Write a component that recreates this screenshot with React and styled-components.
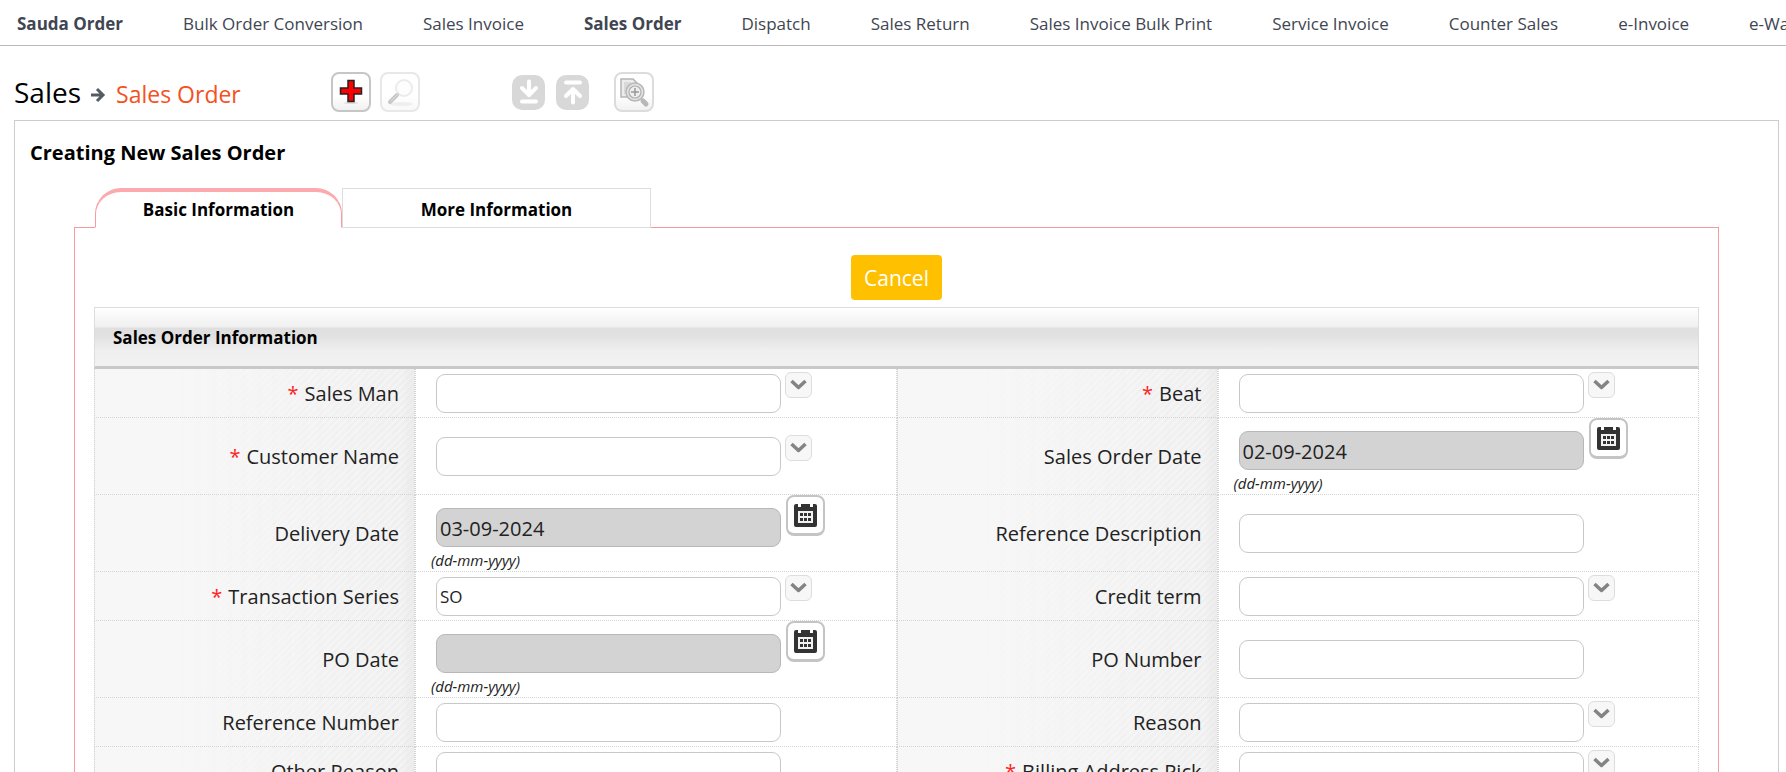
import React from "react";
import styled, { createGlobalStyle, css } from "styled-components";

const GlobalStyle = createGlobalStyle`
  *, *::before, *::after { box-sizing: border-box; }
  html, body, #root { height: 100%; }
  body {
    margin: 0;
    background: #fff;
    color: #000;
    font-family: "Segoe UI", "Open Sans", "Noto Sans", sans-serif;
  }
  button, input { font-family: inherit; }
`;

const Page = styled.div`
  height: 100%;
  overflow: hidden;
`;

const Nav = styled.nav`
  display: flex;
  align-items: center;
  gap: 60px;
  height: 46px;
  padding: 2px 17px 0;
  border-bottom: 1px solid #bbb;
  overflow: hidden;
`;

const NavLink = styled.a`
  flex: none;
  color: #3f4652;
  font-size: 17px;
  font-weight: ${(p) => (p.$strong ? 700 : 400)};
  line-height: 24px;
  text-decoration: none;
  white-space: nowrap;
`;

const Header = styled.header`
  display: flex;
  align-items: center;
  height: 74px;
  padding: 18px 14px 0;
`;

const Breadcrumb = styled.div`
  display: flex;
  align-items: baseline;
  width: 317px;
  padding-top: 2px;
`;

const Crumb = styled.a`
  color: #000;
  font-size: 28px;
  line-height: 40px;
  text-decoration: none;
`;

const CrumbArrow = styled.svg`
  margin: 0 10px;
`;

const CrumbCurrent = styled.h1`
  margin: 0;
  color: #f4511e;
  font-size: 23px;
  font-weight: 400;
  line-height: 40px;
`;

const ToolGroup = styled.div`
  display: flex;
  align-items: center;
  gap: ${(p) => p.$gap}px;
  margin-right: ${(p) => p.$after || 0}px;
`;

const ToolButton = styled.button`
  display: grid;
  place-items: center;
  width: 40px;
  height: 40px;
  padding: 0;
  border: 2px solid ${(p) => (p.$soft ? "#dcdcdc" : "#c6c6c6")};
  border-radius: 8px;
  background: linear-gradient(#fff 60%, #f1f1f1);
  opacity: ${(p) => (p.$faded ? 0.4 : 1)};
`;

const FlatButton = styled.button`
  display: grid;
  place-items: center;
  width: 33px;
  height: 35px;
  padding: 0;
  border: 0;
  border-radius: 10px;
  background: #d8d8d8;
`;

const Panel = styled.main`
  margin: 0 7px 0 14px;
  border: 1px solid #ccc;
  border-bottom: 0;
`;

const PanelTitle = styled.h2`
  margin: 0;
  padding: 16px 15px 20px;
  font-size: 20px;
  font-weight: 700;
  line-height: 31px;
`;

const Tabs = styled.div`
  display: flex;
  margin: 0 80px;
`;

const Tab = styled.button`
  position: relative;
  width: ${(p) => (p.$active ? 247 : 309)}px;
  height: 40px;
  margin-bottom: -1px;
  padding: 2px 0 0;
  border: 1px solid #ddd;
  background: #fff;
  color: #000;
  font-size: 17px;
  font-weight: 700;
  ${(p) =>
    p.$active &&
    css`
      padding: 0 0 1px;
      border-color: #fd9a9f;
      border-top: 4px solid #fdaaae;
      border-bottom-color: #fff;
      border-radius: 26px 26px 0 0;
    `}
`;

const TabPanel = styled.section`
  margin: 0 59px;
  padding: 27px 19px 0;
  border: 1px solid #f79a9e;
  border-bottom: 0;
`;

const Actions = styled.div`
  display: flex;
  justify-content: center;
  padding-bottom: 7px;
`;

const CancelButton = styled.button`
  height: 45px;
  padding: 0 13px;
  border: 0;
  border-radius: 4px;
  background: #ffc000;
  color: #fff;
  font-size: 21px;
`;

const SectionTitle = styled.h3`
  margin: 0;
  padding: 20px 18px 18px;
  border: 1px solid #ddd;
  border-bottom: 3px solid #c9c9c9;
  background: linear-gradient(#fff 0, #f0f0f0 19px, #dfdfdf 20px, #e1e1e1 28px, #efefef 42px, #f2f2f2 58px);
  font-size: 17px;
  font-weight: 700;
  line-height: 20px;
`;

const Row = styled.div`
  display: grid;
  grid-template-columns: 20% 30% 20% 30%;
`;

const dotted = "1px dotted #d4d4d4";

const LabelCell = styled.div`
  display: flex;
  align-items: center;
  justify-content: flex-end;
  gap: 6px;
  padding: 2px 15px 0 0;
  border: ${dotted};
  border-top: 0;
  background:
    linear-gradient(90deg, transparent calc(100% - 14px), #e6e6e680 100%),
    linear-gradient(90deg, #f7f7f7 25%, #f7f7f700 100%),
    repeating-linear-gradient(135deg, #efefef 0 3px, #f4f4f4 3px 5px);
  color: #222;
  font-size: 20px;
  line-height: 28px;
`;

const Required = styled.span`
  color: #f22;
`;

const FieldCell = styled.div`
  display: flex;
  align-items: center;
  padding: 0 0 0 15px;
  border: ${dotted};
  border-top: 0;
  background: #fff;
`;

const Control = styled.div`
  display: flex;
  align-items: flex-start;
  gap: ${(p) => (p.$date ? 5 : 4)}px;
  padding: ${(p) => (p.$date ? "0" : "3px 0 4px 5px")};
`;

const DateStack = styled.div`
  display: flex;
  flex-direction: column;
  padding-top: 13px;
`;

const TextInput = styled.input`
  width: 345px;
  height: 39px;
  margin: ${(p) => (p.$date ? "0 0 0 5px" : "2px 0 0")};
  padding: ${(p) => (p.$date ? "2px 3px 0" : "0 3px")};
  border: 1px solid ${(p) => (p.$date ? "#b8b8b8" : "#c8c8c8")};
  border-radius: 9px;
  background: ${(p) => (p.$date ? "#d3d3d3" : "#fff")};
  color: #222;
  font-size: ${(p) => (p.$date ? 20 : 17)}px;
`;

const Hint = styled.em`
  padding-top: 3px;
  font-size: 15px;
  line-height: 21px;
  color: #222;
`;

const PickButton = styled.button`
  display: grid;
  place-items: center;
  width: 27px;
  height: 26px;
  padding: 0;
  border: 1px solid #ddd;
  border-radius: 6px;
  background: #f7f7f7;
`;

const CalendarButton = styled.button`
  display: grid;
  place-items: center;
  width: 39px;
  height: 41px;
  padding: 0;
  border: 2px solid #c4c4c4;
  border-bottom-width: 3px;
  border-radius: 8px;
  background: #fff;
`;

const PlusIcon = () => (
  <svg width="24" height="26" viewBox="0 0 24 26">
    <ellipse cx="12" cy="24" rx="7" ry="1" fill="#ddd" />
    <path d="M9 1.500h6v7.500h7.500v6H15v7.500H9V15H1.500V9H9z" fill="#f00" stroke="#222" strokeWidth="1.500" />
  </svg>
);

const SearchIcon = () => (
  <svg width="32" height="32" viewBox="0 0 32 32">
    <ellipse cx="17" cy="28" rx="12" ry="2" fill="#d8d8d8" />
    <circle cx="20" cy="12" r="8" fill="#fcfcfc" stroke="#cfcfcf" strokeWidth="2" />
    <path d="M13 19 6 26" stroke="#777" strokeWidth="4" strokeLinecap="round" />
    <path d="M15 17 7 25" stroke="#aaa" strokeWidth="1" />
  </svg>
);

const DownIcon = () => (
  <svg width="24" height="26" viewBox="0 0 24 26" fill="none" stroke="#fff" strokeWidth="4" strokeLinecap="round">
    <path d="M12 2.500v11M5 9l7 7 7-7" strokeLinejoin="round" />
    <path d="M5 22.500h14" />
  </svg>
);

const UpIcon = () => (
  <svg width="24" height="26" viewBox="0 0 24 26" fill="none" stroke="#fff" strokeWidth="4" strokeLinecap="round">
    <path d="M12 23.500v-11M5 17l7-7 7 7" strokeLinejoin="round" />
    <path d="M5 3.500h14" />
  </svg>
);

const LookupIcon = () => (
  <svg width="32" height="32" viewBox="0 0 32 32">
    <path d="M3 3h12l4 4v14H3z" fill="#ececec" stroke="#b5b5b5" strokeWidth="1.500" />
    <path d="M6 6h7v12H6z" fill="#d9d9d9" />
    <path d="m25 25 3 3" stroke="#b8b8b8" strokeWidth="5" strokeLinecap="round" />
    <circle cx="17" cy="16" r="9" fill="#e2e2e2" stroke="#b8b8b8" strokeWidth="1.500" />
    <circle cx="17" cy="16" r="6" fill="#efefef" stroke="#b0b0b0" strokeWidth="1.200" />
    <path d="M17 12v8M13 16h8" stroke="#999" strokeWidth="1.500" />
  </svg>
);

const ChevronIcon = () => (
  <svg width="17" height="12" viewBox="0 0 17 12" fill="none" stroke="#848484" strokeWidth="3.500">
    <path d="m1.500 2 7 6.500 7-6.500" strokeLinejoin="round" />
  </svg>
);

const CalendarIcon = () => (
  <svg width="25" height="25" viewBox="0 0 25 25">
    <path d="M3 1h2v3h3V1h9v3h3V1h2q2 0 2 2v19q0 2-2 2H3q-2 0-2-2V3q0-2 2-2z" fill="#333" />
    <path d="M5 8h15v12H5z" fill="#f2f2f2" />
    <path d="M7 10h3v3H7zM11 10h3v3h-3zM15 10h3v3h-3zM7 15h3v3H7zM11 15h3v3h-3zM15 15h3v3h-3z" fill="#333" />
  </svg>
);

const links = [
  ["Sauda Order", true],
  ["Bulk Order Conversion"],
  ["Sales Invoice"],
  ["Sales Order", true],
  ["Dispatch"],
  ["Sales Return"],
  ["Sales Invoice Bulk Print"],
  ["Service Invoice"],
  ["Counter Sales"],
  ["e-Invoice"],
  ["e-Way Bill"],
];

const rows = [
  [
    { id: "salesman", label: "Sales Man", required: true, pick: true },
    { id: "beat", label: "Beat", required: true, pick: true },
  ],
  [
    { id: "customer", label: "Customer Name", required: true, pick: true },
    { id: "orderDate", label: "Sales Order Date", date: true, value: "02-09-2024" },
  ],
  [
    { id: "deliveryDate", label: "Delivery Date", date: true, value: "03-09-2024" },
    { id: "refDesc", label: "Reference Description" },
  ],
  [
    { id: "series", label: "Transaction Series", required: true, pick: true, value: "SO" },
    { id: "credit", label: "Credit term", pick: true },
  ],
  [
    { id: "poDate", label: "PO Date", date: true },
    { id: "poNumber", label: "PO Number" },
  ],
  [
    { id: "refNumber", label: "Reference Number" },
    { id: "reason", label: "Reason", pick: true },
  ],
  [
    { id: "otherReason", label: "Other Reason" },
    { id: "billing", label: "Billing Address Pick", required: true, pick: true },
  ],
];

function Field({ id, label, required, pick, date, value = "" }) {
  return (
    <>
      <LabelCell>
        {required && <Required>*</Required>}
        <label htmlFor={id}>{label}</label>
      </LabelCell>
      <FieldCell>
        <Control $date={date}>
          {date ? (
            <>
              <DateStack>
                <TextInput id={id} $date readOnly defaultValue={value} />
                <Hint>(dd-mm-yyyy)</Hint>
              </DateStack>
              <CalendarButton type="button" aria-label={`Choose ${label}`}>
                <CalendarIcon />
              </CalendarButton>
            </>
          ) : (
            <>
              <TextInput id={id} defaultValue={value} />
              {pick && (
                <PickButton type="button" aria-label={`Select ${label}`}>
                  <ChevronIcon />
                </PickButton>
              )}
            </>
          )}
        </Control>
      </FieldCell>
    </>
  );
}

export default function App() {
  return (
    <Page>
      <GlobalStyle />
      <Nav>
        {links.map(([text, strong]) => (
          <NavLink key={text} href="#" $strong={strong}>
            {text}
          </NavLink>
        ))}
      </Nav>
      <Header>
        <Breadcrumb>
          <Crumb href="#">Sales</Crumb>
          <CrumbArrow width="15" height="16" viewBox="0 0 15 16" fill="none" stroke="#555b63" strokeWidth="3">
            <path d="M0 8h12M6 2l6 6-6 6" />
          </CrumbArrow>
          <CrumbCurrent>Sales Order</CrumbCurrent>
        </Breadcrumb>
        <ToolGroup $gap={9} $after={92}>
          <ToolButton type="button" aria-label="Create">
            <PlusIcon />
          </ToolButton>
          <ToolButton type="button" aria-label="Search" $faded>
            <SearchIcon />
          </ToolButton>
        </ToolGroup>
        <ToolGroup $gap={11} $after={25}>
          <FlatButton type="button" aria-label="Import">
            <DownIcon />
          </FlatButton>
          <FlatButton type="button" aria-label="Export">
            <UpIcon />
          </FlatButton>
        </ToolGroup>
        <ToolButton type="button" aria-label="Lookup" $soft>
          <LookupIcon />
        </ToolButton>
      </Header>
      <Panel>
        <PanelTitle>Creating New Sales Order</PanelTitle>
        <Tabs role="tablist">
          <Tab type="button" role="tab" aria-selected="true" $active>
            Basic Information
          </Tab>
          <Tab type="button" role="tab" aria-selected="false">
            More Information
          </Tab>
        </Tabs>
        <TabPanel role="tabpanel">
          <Actions>
            <CancelButton type="button">Cancel</CancelButton>
          </Actions>
          <SectionTitle>Sales Order Information</SectionTitle>
          {rows.map((pair) => (
            <Row key={pair[0].id}>
              {pair.map((field) => (
                <Field key={field.id} {...field} />
              ))}
            </Row>
          ))}
        </TabPanel>
      </Panel>
    </Page>
  );
}
